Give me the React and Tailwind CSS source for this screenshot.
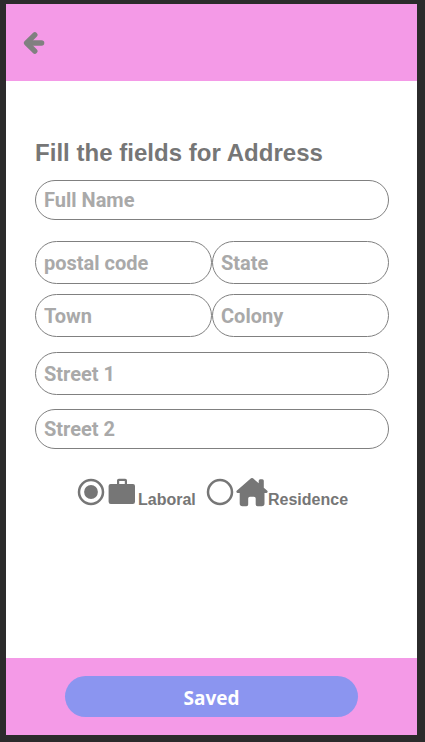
import React from "react";

function Field({ label, className }) {
  return (
    <input
      type="text"
      placeholder={label}
      aria-label={label}
      className={`block min-w-0 rounded-full border border-[#808080] bg-white pl-2 pr-2 font-['Roboto',sans-serif] text-[20px] font-bold leading-6 text-[#767676] outline-none placeholder:text-[#a9a9a9] placeholder:opacity-100 ${className}`}
    />
  );
}

function ArrowIcon() {
  return (
    <svg className="block h-[24px] w-[24px]" viewBox="0 0 24 24" fill="none" stroke="#808080" strokeLinecap="round" strokeLinejoin="round">
      <path d="M12.8 3.9 L4.6 12 L12.8 20.1" strokeWidth="5.4" />
      <path d="M6 12 H19.5" strokeWidth="5.6" />
      <path d="M8 10 V14" strokeWidth="4" />
    </svg>
  );
}

function Radio({ checked }) {
  return (
    <svg className="block h-7 w-7" viewBox="0 0 28 28">
      <circle cx="14" cy="14" r="12" fill="none" stroke="#767676" strokeWidth="2.5" />
      {checked && <circle cx="14" cy="14" r="6.9" fill="#767676" />}
    </svg>
  );
}

function BriefcaseIcon() {
  return (
    <svg className="block h-[28px] w-[28px]" viewBox="0 0 28 28" fill="#767676">
      <path fillRule="evenodd" d="M10 7 V3.5 Q10 1.7 11.8 1.7 H18.2 Q20 1.7 20 3.5 V7 H26 Q28 7 28 9 V24.8 Q28 27 25.8 27 H3.8 Q1.6 27 1.6 24.8 V9 Q1.6 7 3.6 7 Z M12.2 4 V7 H17.8 V4 Z" />
    </svg>
  );
}

function HouseIcon() {
  return (
    <svg className="block h-[30px] w-[32px]" viewBox="0 0 32 30" fill="#767676">
      <path d="M15 1.3 Q16 .5 17 1.3 L22.7 6.3 V3.7 Q22.7 2.2 24.2 2.2 H26.3 Q27.8 2.2 27.8 3.7 V10.8 L31.3 13.8 Q32.3 15.5 30.5 16 H28.5 V26.5 Q28.5 29.2 25.8 29.2 H21.5 Q19.7 29.2 19.7 27.4 V21.5 Q19.7 19.7 17.9 19.7 H14 Q12.2 19.7 12.2 21.5 V27.4 Q12.2 29.2 10.4 29.2 H6.4 Q3.7 29.2 3.7 26.5 V16 H1.5 Q-.3 15.5 .7 13.8 Z" />
    </svg>
  );
}

export default function App() {
  return (
    <div className="h-[742px] w-[425px] bg-[#2b2b2b] pl-[6px] pr-2 pt-1 font-['Liberation_Sans',Arial,sans-serif]">
      <main className="flex h-[731px] flex-col bg-white">
        <header className="flex h-[77px] shrink-0 items-center bg-[#f49ae7] pl-4">
          <button type="button" aria-label="Back">
            <ArrowIcon />
          </button>
        </header>
        <form className="flex flex-1 flex-col pl-[29px] pr-7 pt-[57px]">
          <h1 className="h-[42px] whitespace-nowrap text-[24px] font-bold leading-[30px] tracking-[0.03px] text-[#767676]">Fill the fields for Address</h1>
          <Field label="Full Name" className="h-10 w-full" />
          <div className="mt-[21px] grid grid-cols-2 gap-y-[10px]">
            <Field label="postal code" className="h-[43px] w-full" />
            <Field label="State" className="h-[43px] w-full" />
            <Field label="Town" className="h-[43px] w-full" />
            <Field label="Colony" className="h-[43px] w-full" />
          </div>
          <Field label="Street 1" className="mt-[15px] h-[43px] w-full" />
          <Field label="Street 2" className="mt-[14px] h-10 w-full" />
          <div className="mt-[28px] flex h-[32px] items-start pl-[42px] text-[16px] font-bold leading-5 text-[#767676]">
            <div className="flex w-[129px] items-start">
              <div className="pt-[1px]"><Radio checked /></div>
              <div className="ml-[2px]"><BriefcaseIcon /></div>
              <span className="ml-[3px] mt-[13px]">Laboral</span>
            </div>
            <div className="flex items-start">
              <div className="pt-[1px]"><Radio /></div>
              <div className="ml-[2px]"><HouseIcon /></div>
              <span className="mt-[13px]">Residence</span>
            </div>
          </div>
        </form>
        <footer className="flex h-[77px] shrink-0 items-start bg-[#f49ae7] pl-[59px] pt-[18px]">
          <button type="button" className="h-[41px] w-[293px] rounded-full bg-[#8b95f0] pt-[2px] text-center font-['Open_Sans',sans-serif] text-[19px] font-bold leading-6 text-white">
            Saved
          </button>
        </footer>
      </main>
    </div>
  );
}
